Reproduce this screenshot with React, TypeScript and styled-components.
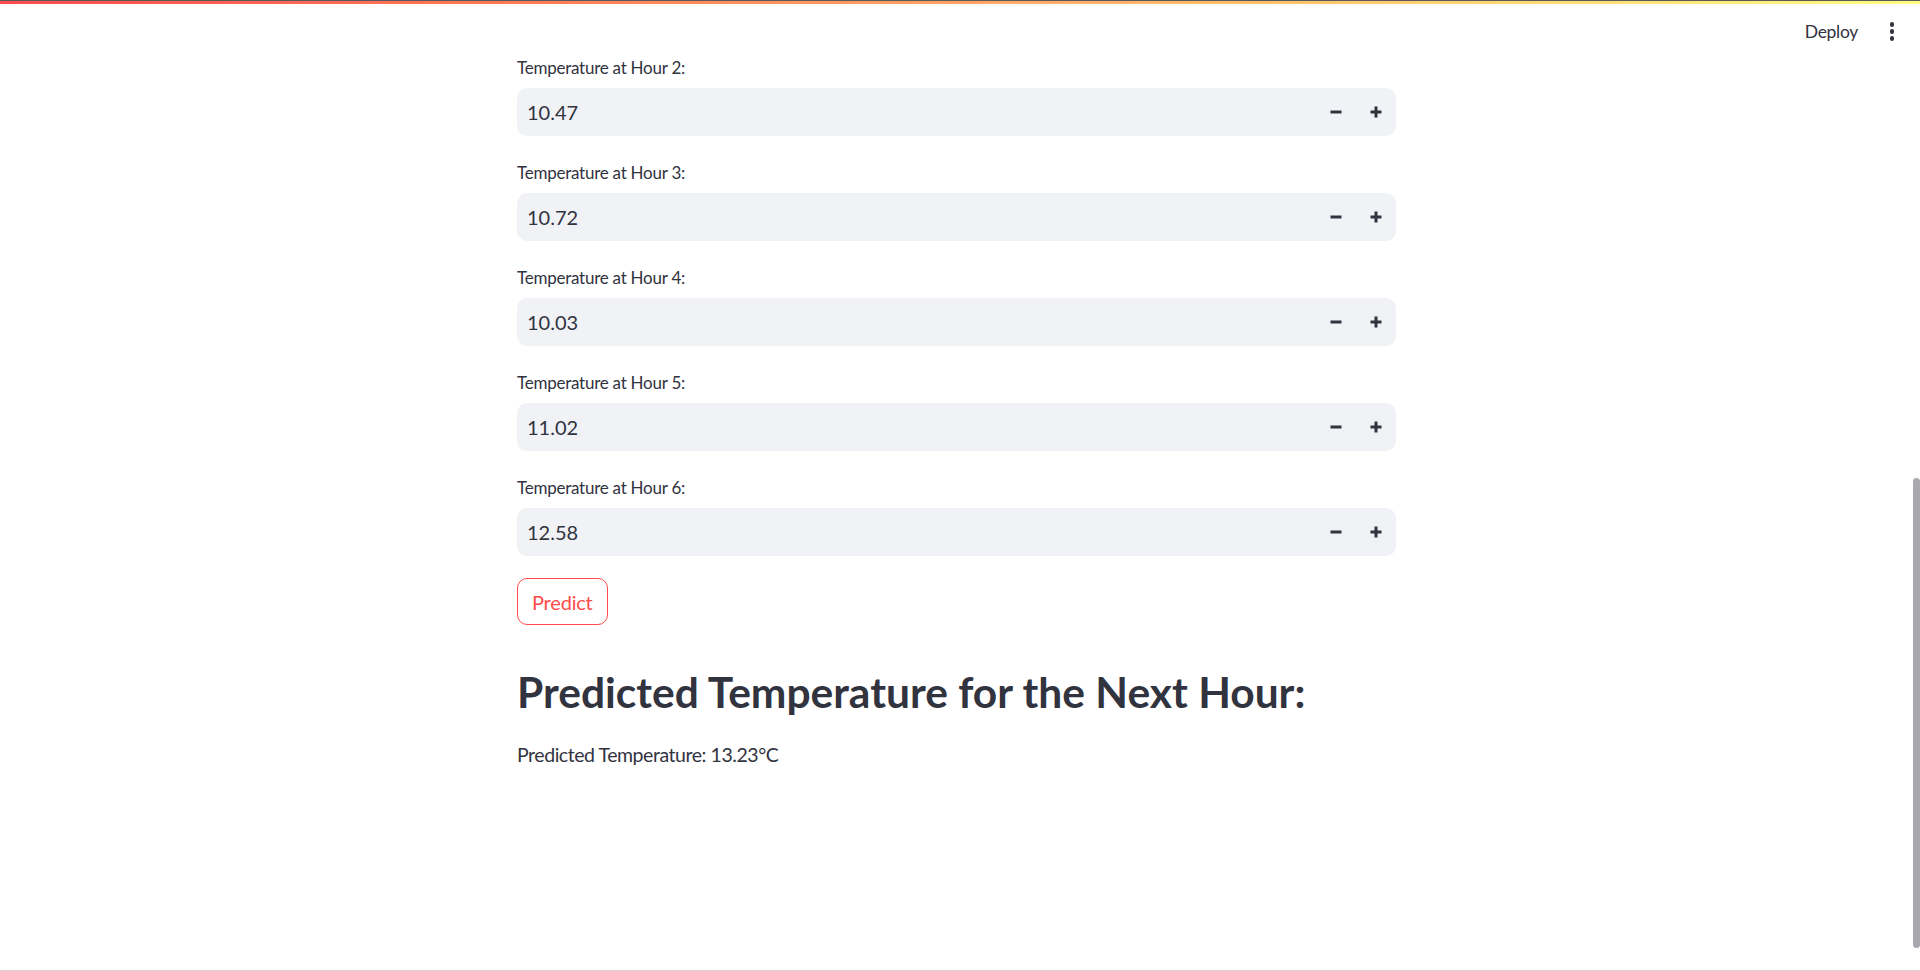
import React from "react";
import styled, { createGlobalStyle } from "styled-components";

const Global = createGlobalStyle`
  html, body {
    margin: 0;
    padding: 0;
    background: #ffffff;
  }
  body {
    font-family: Lato, "Noto Sans", sans-serif;
    color: rgb(49, 51, 63);
    overflow: hidden;
  }
  * { box-sizing: border-box; }
`;

const Shell = styled.div`
  position: relative;
  height: 971px;
  display: grid;
  grid-template-rows: 1fr;
  border-bottom: 1px solid #d6d6d6;
  overflow: hidden;
`;

const Header = styled.header`
  position: absolute;
  top: 0;
  left: 0;
  right: 0;
  display: flex;
  flex-direction: column;
  z-index: 2;
`;

const Decoration = styled.div`
  height: 4px;
  border-top: 1px solid #5a5a5a;
  background: linear-gradient(90deg, rgb(255, 75, 75), rgb(255, 253, 128));
`;

const Toolbar = styled.div`
  height: 55px;
  display: flex;
  justify-content: flex-end;
  align-items: center;
  padding-right: 8px;
`;

const DeployButton = styled.button`
  border: none;
  background: transparent;
  font-family: Lato, "Noto Sans", sans-serif;
  font-size: 17.5px;
  letter-spacing: -0.3px;
  color: rgb(49, 51, 63);
  padding: 0 14px;
  height: 40px;
  cursor: pointer;
`;

const MenuButton = styled.button`
  width: 40px;
  height: 40px;
  border: none;
  background: transparent;
  display: flex;
  flex-direction: column;
  align-items: center;
  justify-content: center;
  gap: 2.5px;
  padding: 0;
`;

const Dot = styled.span`
  width: 4.5px;
  height: 4.5px;
  border-radius: 50%;
  background: rgb(49, 51, 63);
`;

const Main = styled.main`
  display: grid;
  grid-template-columns: 1fr 7px;
  height: 970px;
`;

const Content = styled.section`
  width: 879px;
  margin: 0 auto;
  padding-top: 53px;
  display: flex;
  flex-direction: column;
  gap: 22px;
  align-items: flex-start;
`;

const Field = styled.div`
  width: 100%;
  display: flex;
  flex-direction: column;
`;

const Label = styled.label`
  height: 30px;
  margin-bottom: 5px;
  padding-bottom: 2px;
  display: flex;
  align-items: center;
  font-size: 17px;
  letter-spacing: -0.25px;
  color: rgb(49, 51, 63);
`;

const InputBox = styled.div`
  height: 48px;
  border-radius: 10px;
  background: rgb(240, 242, 246);
  display: flex;
  align-items: center;
`;

const Value = styled.span`
  flex: 1;
  padding-left: 10px;
  font-size: 20px;
  color: rgb(49, 51, 63);
`;

const StepButton = styled.button`
  width: 40px;
  height: 100%;
  border: none;
  background: transparent;
  display: flex;
  align-items: center;
  justify-content: center;
  padding: 0;
  color: rgb(49, 51, 63);
`;

const PredictButton = styled.button`
  height: 47px;
  padding: 0 14px;
  border: 1px solid rgb(255, 75, 75);
  border-radius: 10px;
  background: #ffffff;
  color: rgb(255, 75, 75);
  font-family: Lato, "Noto Sans", sans-serif;
  font-size: 20px;
  letter-spacing: -0.2px;
`;

const Heading = styled.h2`
  margin: 19px 0 0;
  font-size: 42.5px;
  line-height: 1.2;
  font-weight: 700;
  color: rgb(49, 51, 63);
`;

const Result = styled.p`
  margin: 0;
  font-size: 19.5px;
  letter-spacing: -0.45px;
  line-height: 1.6;
  color: rgb(49, 51, 63);
`;

const ScrollTrack = styled.div`
  display: flex;
  flex-direction: column;
  padding-top: 478px;
`;

const ScrollThumb = styled.div`
  height: 470px;
  width: 7px;
  border-radius: 4px;
  background: rgb(168, 168, 174);
`;

const MinusIcon = () => (
  <svg width="12" height="12" viewBox="0 0 12 12">
    <rect x="0.5" y="4.5" width="11" height="3" fill="currentColor" />
  </svg>
);

const PlusIcon = () => (
  <svg width="12" height="12" viewBox="0 0 12 12">
    <rect x="0.5" y="4.5" width="11" height="3" fill="currentColor" />
    <rect x="4.5" y="0.5" width="3" height="11" fill="currentColor" />
  </svg>
);

const readings = [
  { hour: 2, value: "10.47" },
  { hour: 3, value: "10.72" },
  { hour: 4, value: "10.03" },
  { hour: 5, value: "11.02" },
  { hour: 6, value: "12.58" },
];

export default function App() {
  return (
    <>
      <Global />
      <Shell>
        <Header>
          <Decoration />
          <Toolbar>
            <DeployButton>Deploy</DeployButton>
            <MenuButton aria-label="menu">
              <Dot />
              <Dot />
              <Dot />
            </MenuButton>
          </Toolbar>
        </Header>
        <Main>
          <Content>
            {readings.map((r) => (
              <Field key={r.hour}>
                <Label>Temperature at Hour {r.hour}:</Label>
                <InputBox>
                  <Value>{r.value}</Value>
                  <StepButton aria-label="decrement">
                    <MinusIcon />
                  </StepButton>
                  <StepButton aria-label="increment">
                    <PlusIcon />
                  </StepButton>
                </InputBox>
              </Field>
            ))}
            <PredictButton>Predict</PredictButton>
            <Heading>Predicted Temperature for the Next Hour:</Heading>
            <Result>Predicted Temperature: 13.23°C</Result>
          </Content>
          <ScrollTrack>
            <ScrollThumb />
          </ScrollTrack>
        </Main>
      </Shell>
    </>
  );
}
